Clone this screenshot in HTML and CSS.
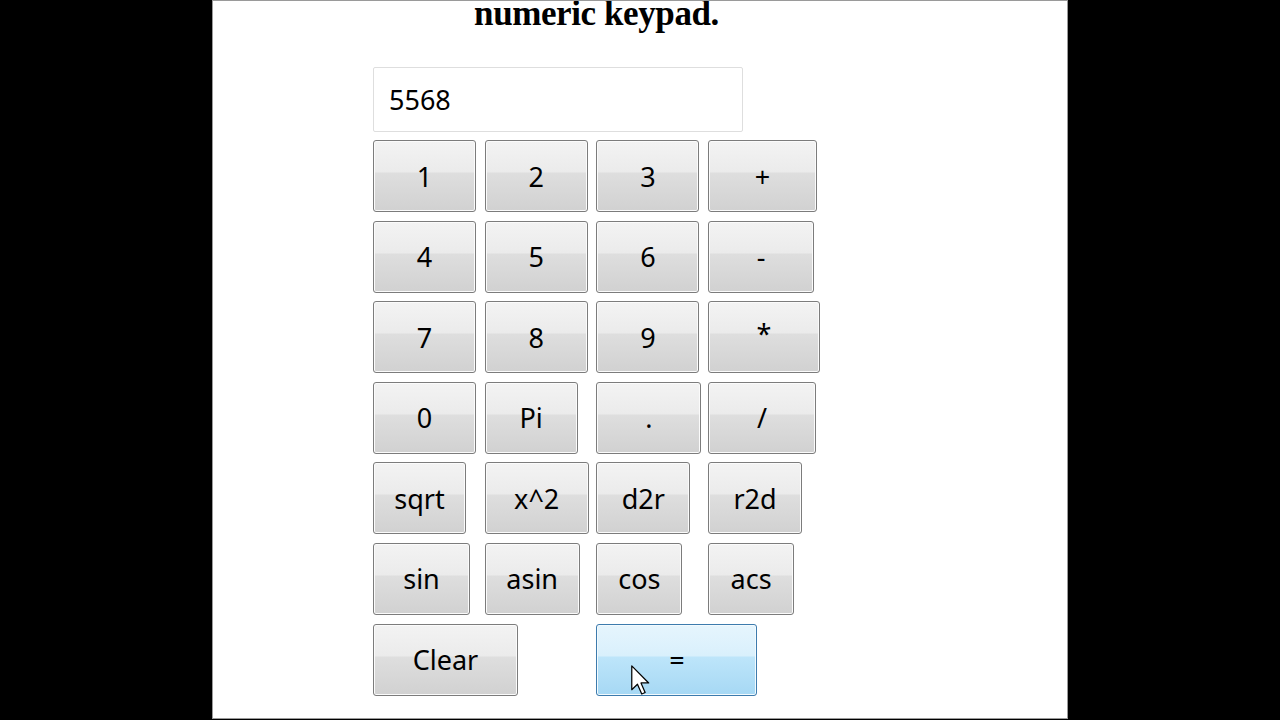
FILE: index.html
```html
<!DOCTYPE html>
<html lang="en">
<head>
    <meta charset="UTF-8">
    <title>Numeric keypad</title>
    <link rel="stylesheet" href="styles.css">
</head>
<body>

    <div class="page">
        <div class="keypad">
            <h1 class="title">numeric keypad.</h1>
            <input type="text" class="display" value="5568">
            <div class="keys">
                <button class="key">1</button>
                <button class="key">2</button>
                <button class="key">3</button>
                <button class="key k-plus">+</button>

                <button class="key">4</button>
                <button class="key">5</button>
                <button class="key">6</button>
                <button class="key k-minus">-</button>

                <button class="key">7</button>
                <button class="key">8</button>
                <button class="key">9</button>
                <button class="key k-times">*</button>

                <button class="key">0</button>
                <button class="key k-pi">Pi</button>
                <button class="key k-dot">.</button>
                <button class="key k-div">/</button>

                <button class="key k-sqrt">sqrt</button>
                <button class="key k-sq">x^2</button>
                <button class="key k-d2r">d2r</button>
                <button class="key k-r2d">r2d</button>

                <button class="key k-sin">sin</button>
                <button class="key k-asin">asin</button>
                <button class="key k-cos">cos</button>
                <button class="key k-acs">acs</button>

                <button class="key k-clear">Clear</button>
                <button class="key k-equals">=
                    <svg class="cursor" width="20" height="31" viewBox="0 0 13 20">
                        <path d="M0.5 0.5 L0.5 16 L4.2 12.4 L7 18.8 L9.2 17.8 L6.5 11.6 L11.5 11.6 Z" fill="#fff" stroke="#000" stroke-width="0.8" stroke-linejoin="round"/>
                    </svg>
                </button>
            </div>
        </div>
    </div>

</body>
</html>
```

FILE: styles.css
```css
*{
    margin: 0;
    padding: 0;
    box-sizing: border-box;
}

body{
    background-color: black;
    font-family: "Noto Sans", "DejaVu Sans", sans-serif;
}

.page{
    width: 856px;
    height: 719px;
    margin: 0 auto;
    background-color: white;
    border: 1px solid #9a9a9a;
    padding-left: 160px;
    overflow: hidden;
}

.keypad{
    width: 447px;
}

.title{
    font-family: "Liberation Serif", serif;
    font-weight: bold;
    font-size: 35px;
    letter-spacing: -0.4px;
    line-height: 30px;
    text-align: center;
    margin-top: -2px;
    margin-bottom: 38px;
    color: #000;
}

.display{
    display: block;
    width: 370px;
    height: 65px;
    border: 1px solid #dedede;
    border-radius: 2px;
    padding-left: 15px;
    font-family: "Noto Sans", sans-serif;
    font-size: 27px;
    color: #000;
    outline: none;
    margin-bottom: 8px;
}

.keys{
    display: grid;
    grid-template-columns: repeat(4, 111.7px);
    grid-auto-rows: 72px;
    row-gap: 8.6px;
    justify-items: start;
}

.key{
    position: relative;
    width: 103px;
    height: 72px;
    border: 1px solid #7c7c7c;
    border-radius: 3px;
    background: linear-gradient(#f3f3f3 0%, #ebebeb 44%, #dedede 46%, #d1d1d1 100%);
    box-shadow: inset 0 0 0 1px #fbfbfb;
    font-family: "Noto Sans", sans-serif;
    font-size: 27px;
    color: #000;
}

.k-plus{ width: 109px; }
.k-minus{ width: 106px; }
.k-times{ width: 112px; padding-bottom: 8px; }
.k-pi{ width: 93px; }
.k-dot{ width: 105px; }
.k-div{ width: 108px; }
.k-sqrt{ width: 93px; }
.k-sq{ width: 104px; }
.k-d2r{ width: 94px; }
.k-r2d{ width: 94px; }
.k-sin{ width: 97px; }
.k-asin{ width: 95px; }
.k-cos{ width: 86px; }
.k-acs{ width: 86px; }
.k-clear{ width: 145px; }

.k-equals{
    grid-column: 3 / span 2;
    width: 161px;
    border-color: #3d7bad;
    background: linear-gradient(#e6f5fd 0%, #d9f0fc 44%, #bde5fa 46%, #a6d8f4 100%);
    box-shadow: inset 0 0 0 1px #f2fafe;
}

.cursor{
    position: absolute;
    left: 34px;
    top: 40px;
}
```
